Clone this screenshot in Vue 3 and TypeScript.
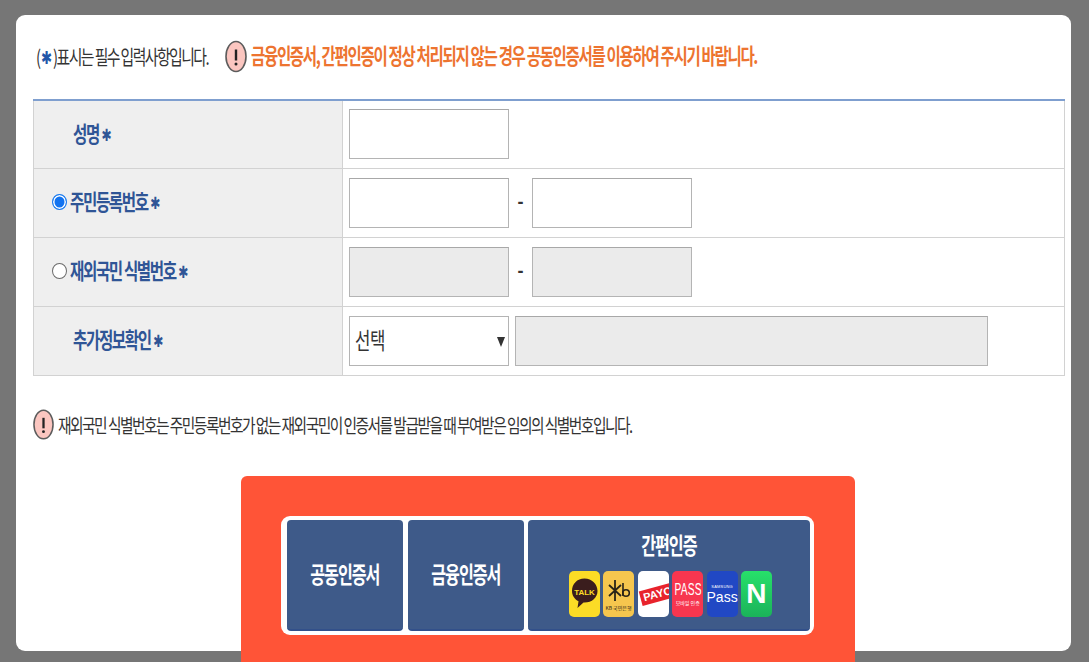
<script setup lang="ts">
interface Badge { key: string }
const badges: Badge[] = [
  { key: 'talk' }, { key: 'kb' }, { key: 'payco' }, { key: 'pass' }, { key: 'samsung' }, { key: 'naver' }
]
</script>

<template>
  <div class="page">
    <div class="modal">
      <div class="notice">
        <div class="required"><span class="sq">(<b>✱</b>)표시는 필수 입력사항입니다.</span></div>
        <svg class="alert big" viewBox="0 0 22 33" aria-hidden="true"><ellipse cx="11" cy="16.5" rx="10" ry="15" fill="#fbc6c0" stroke="#5c5c5c" stroke-width="1.6"/><path d="M11 9.500v11" stroke="#222" stroke-width="2.4"/><circle cx="11" cy="24" r="1.500" fill="#222"/></svg>
        <span class="warn sq">금융인증서, 간편인증이 정상 처리되지 않는 경우 공동인증서를 이용하여 주시기 바랍니다.</span>
      </div>

      <table class="form">
        <tbody>
          <tr class="first">
            <th class="indent"><span class="sq">성명<i>✱</i></span></th>
            <td><input class="field" type="text" /></td>
          </tr>
          <tr>
            <th><span class="radio on"></span><span class="sq">주민등록번호<i>✱</i></span></th>
            <td><div class="pair"><input class="field" type="text" /><span class="dash">-</span><input class="field" type="text" /></div></td>
          </tr>
          <tr>
            <th><span class="radio"></span><span class="sq">재외국민 식별번호<i>✱</i></span></th>
            <td><div class="pair"><input class="field off" type="text" disabled /><span class="dash">-</span><input class="field off" type="text" disabled /></div></td>
          </tr>
          <tr>
            <th class="indent"><span class="sq">추가정보확인<i>✱</i></span></th>
            <td>
              <div class="pair extra">
                <div class="select"><span class="sq">선택</span><span class="caret"></span></div>
                <input class="field off wide" type="text" disabled />
              </div>
            </td>
          </tr>
        </tbody>
      </table>

      <div class="foot-note">
        <svg class="alert" viewBox="0 0 22 33" aria-hidden="true"><ellipse cx="11" cy="16.5" rx="10" ry="15" fill="#fbc6c0" stroke="#5c5c5c" stroke-width="1.6"/><path d="M11 9.500v11" stroke="#222" stroke-width="2.4"/><circle cx="11" cy="24" r="1.500" fill="#222"/></svg>
        <span class="sq">재외국민 식별번호는 주민등록번호가 없는 재외국민이 인증서를 발급받을 때 부여받은 임의의 식별번호입니다.</span>
      </div>

      <div class="promo">
        <div class="tabs">
          <div class="tab cert"><span class="mid">공동인증서</span></div>
          <div class="tab fin"><span class="mid">금융인증서</span></div>
          <div class="tab simple">
            <div class="simple-title"><span class="mid">간편인증</span></div>
            <div class="badges">
              <div v-for="b in badges" :key="b.key" class="badge" :class="b.key">
                <template v-if="b.key === 'talk'">
                  <svg viewBox="0 0 31 46" class="badge-svg"><path d="M15.500 7.500C8 7.500 3 13 3 20c0 4.500 2.600 8.300 6.500 10.300L8.500 37l6-5.500h1c7.500 0 13-5 13-11.600S23 7.500 15.500 7.500z" fill="#3a1d1d"/><text x="15.500" y="24" text-anchor="middle" class="talk-text">TALK</text></svg>
                </template>
                <template v-else-if="b.key === 'kb'">
                  <svg viewBox="0 0 31 46" class="badge-svg"><path d="M12 9v21M6 14l12 11M18 14L6 25" stroke="#2a2418" stroke-width="1.800" fill="none"/><path d="M20 12v13" stroke="#2a2418" stroke-width="1.600"/><circle cx="23" cy="22" r="3.300" stroke="#2a2418" stroke-width="1.600" fill="none"/><text x="15.500" y="39" text-anchor="middle" class="kb-text">KB 국민은행</text></svg>
                </template>
                <template v-else-if="b.key === 'payco'">
                  <div class="payco-band">PAYCO</div>
                </template>
                <template v-else-if="b.key === 'pass'">
                  <span class="pass-main">PASS</span><span class="pass-sub">모바일 인증</span>
                </template>
                <template v-else-if="b.key === 'samsung'">
                  <span class="sam-top">SAMSUNG</span><span class="sam-main">Pass</span>
                </template>
                <template v-else>N</template>
              </div>
            </div>
          </div>
        </div>
      </div>
    </div>
  </div>
</template>

<style>
html, body { margin: 0; height: 100%; overflow: hidden; background: #767676; }
</style>

<style scoped>
.page {
  height: 662px;
  overflow: hidden;
  padding: 15px 18px 0 16px;
  box-sizing: border-box;
  font-family: "Noto Sans CJK KR", "Noto Sans", sans-serif;
}
.modal {
  height: 636px;
  background: #fff;
  border-radius: 9px;
  padding: 0 6px 0 17px;
  box-sizing: border-box;
}
.sq { display: inline-block; transform-origin: left center; white-space: nowrap; }
.mid { display: inline-block; transform: scale(.77, 1.1); white-space: nowrap; }
.notice {
  height: 84px;
  display: flex;
  align-items: center;
  padding: 0 0 0 3px;
}
.required {
  font-size: 18px;
  letter-spacing: -1.9px;
  color: #333;
  width: 189px;
  flex: none;
  margin-top: -3px;
}
.required .sq { transform: scale(.826, 1.12); }
.required b { color: #2456a8; font-weight: 700; font-size: 16px; margin: 0 3px 0 2px; font-family: "DejaVu Sans", sans-serif; vertical-align: 1px; }
.alert { width: 22px; height: 33px; flex: none; }
.alert.big { margin-right: 4px; margin-top: -1px; }
.warn {
  font-size: 19px;
  font-weight: 700;
  letter-spacing: -1.62px;
  color: #ed7430;
  margin-top: -5px;
  transform: scale(.816, 1.12);
}
.form {
  width: 1032px;
  border-collapse: collapse;
  table-layout: fixed;
  border-top: 2px solid #7f9fcf;
}
.form th, .form td {
  height: 69px;
  border: 1px solid #d2d2d2;
  padding: 0;
  box-sizing: border-box;
}
.form .first th, .form .first td { border-top: 0; height: 68px; }
.form th {
  width: 309px;
  background: #efefef;
  color: #2f5596;
  font-size: 19px;
  font-weight: 700;
  letter-spacing: -1.7px;
  text-align: left;
  padding-left: 18px;
  white-space: nowrap;
}
.form th .sq { transform: scale(.82, 1.12); vertical-align: middle; margin-bottom: 5px; }
.form th.indent { padding-left: 39px; }
.form th i { font-style: normal; margin-left: 3px; font-size: 15px; color: #2f5596; font-family: "DejaVu Sans", sans-serif; font-weight: 700; letter-spacing: 0; vertical-align: 1px; }
.form td { padding-left: 6px; background: #fff; }
.radio {
  display: inline-block;
  width: 15px;
  height: 16px;
  border: 1px solid #6a6a6a;
  border-radius: 50%;
  background: #fff;
  box-sizing: border-box;
  vertical-align: middle;
  margin-right: 3px;
  margin-bottom: 2px;
}
.radio.on {
  border: 1.500px solid #1b7cf0;
  box-shadow: inset 0 0 0 1.500px #fff;
  background: #1273f0;
}
.field {
  display: block;
  width: 160px;
  height: 50px;
  border: 1px solid #b4b4b4;
  border-top-color: #a8a8a8;
  background: #fff;
  box-sizing: border-box;
  padding: 0;
  margin: 0;
}
.field.off { background: #ebebeb; }
.field.wide { width: 473px; margin-left: 6px; }
.pair { display: flex; align-items: center; }
.dash {
  width: 23px;
  text-align: center;
  font-size: 18px;
  font-family: "Liberation Sans", sans-serif;
  font-weight: 700;
  color: #333;
}
.select {
  width: 160px;
  height: 50px;
  border: 1px solid #b4b4b4;
  box-sizing: border-box;
  position: relative;
  display: flex;
  align-items: center;
  padding-left: 5px;
  font-size: 21px;
  letter-spacing: -0.6px;
  color: #333;
  background: #fff;
}
.select .sq { transform: scale(.8, 1.1); margin-top: -4px; }
.caret {
  position: absolute;
  right: 3px;
  top: 20px;
  border-left: 4px solid transparent;
  border-right: 4px solid transparent;
  border-top: 10px solid #333;
}
.foot-note {
  height: 100px;
  display: flex;
  align-items: center;
  font-size: 17.500px;
  letter-spacing: -1.83px;
  color: #333;
  gap: 4px;
}
.foot-note .sq { margin-top: -3px; transform: scale(.843, 1.12); }
.foot-note .alert { width: 21px; height: 33px; margin-top: -2px; }
.promo {
  width: 614px;
  height: 300px;
  margin-left: 208px;
  background: #ff5437;
  border-radius: 6px 6px 0 0;
  padding: 40px 0 0 40px;
  box-sizing: border-box;
}
.tabs {
  width: 533px;
  height: 119px;
  background: #fff;
  border-radius: 9px;
  padding: 4px 4px 4px 6px;
  box-sizing: border-box;
  display: flex;
  gap: 4px;
}
.tab {
  height: 111px;
  background: #3e5a89;
  border-bottom: 2px solid #32508a;
  box-sizing: border-box;
  border-radius: 4px;
  color: #fff;
  font-size: 21px;
  font-weight: 700;
  letter-spacing: -1.400px;
  display: flex;
  align-items: center;
  justify-content: center;
}
.tab.cert { width: 116px; }
.tab.fin { width: 116px; margin-left: 1px; }
.tab.cert .mid, .tab.fin .mid { margin-top: -2px; }
.tab.simple {
  width: 282px;
  flex-direction: column;
  justify-content: flex-start;
  padding-top: 9px;
}
.simple-title { font-size: 21px; line-height: 30px; }
.badges { display: flex; gap: 3.400px; margin-top: 12px; margin-left: 3px; }
.badge {
  width: 31px;
  height: 46px;
  border-radius: 5px;
  overflow: hidden;
  display: flex;
  flex-direction: column;
  align-items: center;
  justify-content: center;
  font-family: "Liberation Sans", sans-serif;
  font-weight: 400;
  letter-spacing: 0;
}
.badge-svg { width: 31px; height: 46px; display: block; }
.badge.talk { background: #fbdc26; }
.badge.kb { background: #f6c64e; }
.badge.payco { background: #fff; position: relative; }
.badge.pass { background: #f7364f; }
.badge.samsung { background: #2148c4; }
.badge.naver {
  background: linear-gradient(#27e06a, #1bb35a);
  font-size: 28px;
  font-weight: 700;
}
.talk-text { font-size: 8px; font-weight: 700; fill: #fbdc26; font-family: "Liberation Sans", sans-serif; }
.kb-text { font-size: 5px; fill: #2a2418; font-family: "Noto Sans CJK KR", sans-serif; }
.payco-band {
  width: 40px;
  background: #e8232c;
  color: #fff;
  font-size: 11px;
  font-weight: 700;
  line-height: 15px;
  text-align: left;
  padding-left: 3px;
  box-sizing: border-box;
  transform: rotate(-15deg);
  flex: none;
  margin-left: 2px;
  align-self: flex-start;
}
.pass-main { display: block; font-size: 15px; letter-spacing: 0.300px; line-height: 17px; transform: scale(.68, 1.05); }
.pass-sub { font-size: 5px; font-family: "Noto Sans CJK KR", sans-serif; line-height: 9px; }
.sam-top { font-size: 4px; font-weight: 400; letter-spacing: 0.200px; line-height: 7px; }
.sam-main { font-size: 14px; line-height: 15px; }
</style>
